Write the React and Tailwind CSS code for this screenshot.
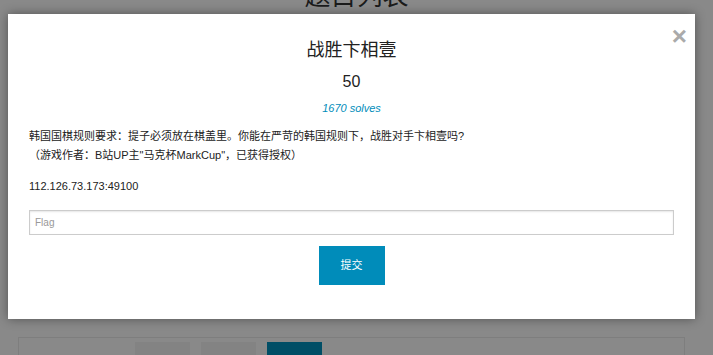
export default function App() {
  const font = { fontFamily: '"Liberation Sans", "Noto Sans CJK SC", sans-serif' }

  return (
    <div className="relative h-[355px] w-[713px] overflow-hidden bg-[#898989]" style={font}>
      {/* page behind the overlay */}
      <div className="-mt-[19px] text-center text-[26px] leading-[30px] text-[#1b1b1b]">题目列表</div>
      <div className="ml-[18px] mr-[28px] mt-[326px] h-[40px] border border-[#7e7e7e] pt-[4px]">
        <div className="flex gap-[11px] pl-[116px]">
          <div className="h-[30px] w-[55px] bg-[#838383]" />
          <div className="h-[30px] w-[55px] bg-[#838383]" />
          <div className="h-[30px] w-[55px] bg-[#004e66]" />
        </div>
      </div>

      {/* modal */}
      <div className="absolute left-[8px] top-[14px] h-[305px] w-[687px] bg-white shadow-[0_0_10px_rgba(0,0,0,0.4)]">
        <button className="absolute right-[8px] top-[9px] text-[26px] font-bold leading-none text-[#aaa]">×</button>
        <div className="flex flex-col items-center pt-[25px]">
          <h3 className="text-[18px] leading-[22px] text-[#222]">战胜卞相壹</h3>
          <div className="mt-[11px] text-[16px] leading-[20px] text-[#222]">50</div>
          <div className="mt-[9px] text-[11px] italic leading-[14px] text-[#008cba]">1670 solves</div>
        </div>
        <div className="px-[21px] pt-[12px] text-[11px] leading-[19px] text-[#222]">
          <p>韩国国棋规则要求：提子必须放在棋盖里。你能在严苛的韩国规则下，战胜对手卞相壹吗?</p>
          <p>（游戏作者：B站UP主"马克杯MarkCup"，已获得授权）</p>
          <p className="mt-[12px]">112.126.73.173:49100</p>
        </div>
        <div className="px-[21px] pt-[13px]">
          <input
            className="h-[25px] w-full border border-[#ccc] px-[5px] text-[10px] text-[#222] shadow-[inset_0_1px_2px_rgba(0,0,0,0.1)] outline-none placeholder:text-[#999]"
            placeholder="Flag"
          />
        </div>
        <div className="flex justify-center pt-[11px]">
          <button className="h-[39px] w-[66px] bg-[#008cba] text-[11px] text-white">提交</button>
        </div>
      </div>
    </div>
  )
}
